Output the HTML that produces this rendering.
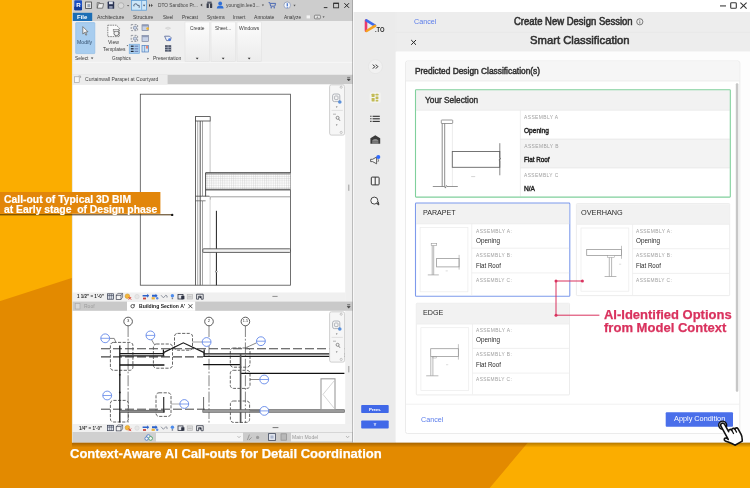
<!DOCTYPE html>
<html lang="en"><head><meta charset="utf-8"><title>Smart Classification</title>
<style>
html,body{margin:0;padding:0}
body{width:750px;height:488px;position:relative;overflow:hidden;background:#FBAD00;font-family:"Liberation Sans",sans-serif}
#stage{position:absolute;left:0;top:0;width:750px;height:488px;filter:blur(0.4px)}
svg{position:absolute;left:0;top:0;width:750px;height:488px;display:block;overflow:visible}
.t{position:absolute;white-space:nowrap;line-height:1.15;transform-origin:0 50%}
</style></head><body><div id="stage">
<svg viewBox="0 0 750 488" width="750" height="488">
<defs><linearGradient id="sh" x1="0" y1="0" x2="0" y2="1"><stop offset="0" stop-color="#5a3500" stop-opacity=".6"/><stop offset="1" stop-color="#5a3500" stop-opacity="0"/></linearGradient></defs>
<rect x="-12" y="-12" width="777" height="512" fill="#FBAD00" />
<polygon points="-12,305.1 74,277.3 74,440 530,440 479.6,500 -12,500" fill="#E38A00"/>
<rect x="72" y="441" width="693" height="6.5" fill="url(#sh)" />
</svg>
<svg viewBox="0 0 750 488" width="750" height="488">
<rect x="72" y="-12" width="281.6" height="454.4" fill="#ffffff" />
<rect x="72" y="-12" width="281" height="33" fill="#CDCDCD" />
<rect x="72" y="21" width="281" height="41" fill="#EFEFEF" />
<rect x="72" y="62" width="281" height="12.7" fill="#F0F0F0" />
<line x1="72" y1="62.3" x2="353" y2="62.3" stroke="#F9F9F9" stroke-width="0.8" />
<rect x="72" y="74.7" width="281" height="9.6" fill="#C9C9C9" />
<rect x="72" y="74.7" width="95.6" height="9.6" fill="#ECECEC" />
<rect x="345.2" y="84.2" width="7.8" height="217.3" fill="#EFEFEF" />
<rect x="345.2" y="311" width="7.8" height="120" fill="#EFEFEF" />
<rect x="72" y="292.5" width="273.2" height="9.0" fill="#F0F0F0" />
<rect x="72" y="301.5" width="281" height="9.3" fill="#C9C9C9" />
<rect x="127" y="301.5" width="68.2" height="9.3" fill="#ffffff" />
<rect x="72" y="424" width="281" height="8" fill="#F0F0F0" />
<rect x="72" y="432" width="281" height="10.4" fill="#D0D0D0" />
<rect x="156" y="432.8" width="87" height="8.6" fill="#F5F5F5" />
<rect x="243" y="432.8" width="48" height="8.6" fill="#CBCBCB" />
<rect x="291" y="432.8" width="61.3" height="8.6" fill="#F0F0F0" />
<line x1="353.1" y1="-12" x2="353.1" y2="442.4" stroke="#858585" stroke-width="1.2" />
<line x1="72.4" y1="-12" x2="72.4" y2="442.4" stroke="#E9E2CF" stroke-width="0.8" />
<rect x="74.3" y="0.3" width="7.7" height="9.9" fill="#1B4FC3" rx="0.8" />
<rect x="74.3" y="6.5" width="7.7" height="3.7" fill="#123A9A" rx="0.8" />
<rect x="85.6" y="2" width="5.8" height="6.4" fill="#E8E8E8" stroke="#444" stroke-width="0.8" />
<rect x="87.4" y="4" width="2.8" height="3.2" fill="#9AA4B5" />
<path d="M97.2 8.2 L98.4 3.6 L103.6 3.6 L102.6 8.2 Z M97.2 8.2 L97.2 2.6 L99.6 2.6 L100.2 3.6" fill="#EDEDED" stroke="#555" stroke-width="0.7" />
<rect x="107.6" y="1.6" width="6.6" height="7.2" fill="#2A3352" rx="0.6" />
<rect x="109" y="1.6" width="3.8" height="2.6" fill="#DDE2EE" />
<rect x="109.2" y="6" width="3.4" height="2.8" fill="#8C95AE" />
<circle cx="121" cy="5.6" r="2.9" fill="#D9D9D9" stroke="#A9A9A9" stroke-width="0.8" />
<path d="M127 5 l2.2 0 l-1.1 1.6 z" fill="#555" />
<rect x="131.4" y="0.4" width="15.2" height="9.8" fill="#CDE6F7" stroke="#5B9BD5" stroke-width="0.8" />
<line x1="141.6" y1="0.8" x2="141.6" y2="9.8" stroke="#5B9BD5" stroke-width="0.7" />
<path d="M134 6.4 a1.8 1.8 0 1 1 3.4 -1 l1.8 0 l0 2.4" fill="none" stroke="#3A4A66" stroke-width="0.8" />
<path d="M143 4.8 l2.2 0 l-1.1 1.6 z" fill="#445" />
<path d="M149 3.8 l1.5 1.6 l-1.5 1.6 z M151.2 3.8 l1.5 1.6 l-1.5 1.6 z" fill="#333" />
<path d="M200.4 5 l1.8 -1.5 l0 3 z" fill="#444" />
<rect x="206.6" y="3.2" width="2.2" height="4.8" fill="#3A3F4D" rx="0.5" />
<rect x="210" y="3.2" width="2.2" height="4.8" fill="#3A3F4D" rx="0.5" />
<rect x="207.2" y="1.6" width="4.4" height="2.0" fill="#555B6A" />
<circle cx="220.2" cy="3.4" r="1.9" fill="#2F6FD6" />
<path d="M216.8 8.6 a3.4 3.2 0 0 1 6.8 0 z" fill="#2F6FD6" />
<path d="M261.8 4.6 l2.2 0 l-1.1 1.6 z" fill="#555" />
<path d="M268.6 2.6 l1.2 0 l0.8 3.6 l4.2 0 l0.8 -2.8 l-5.4 0" fill="none" stroke="#3D5FB0" stroke-width="0.9" />
<circle cx="271.2" cy="7.8" r="0.7" fill="#3D5FB0" />
<circle cx="274.2" cy="7.8" r="0.7" fill="#3D5FB0" />
<circle cx="287.2" cy="5.2" r="3.3" fill="#F4F7FC" stroke="#8C98B5" stroke-width="0.8" />
<rect x="286.7" y="3.2" width="1.1" height="3.0" fill="#2D63C8" />
<rect x="286.7" y="6.8" width="1.1" height="0.9" fill="#2D63C8" />
<path d="M293.4 4.8 l2.2 0 l-1.1 1.6 z" fill="#555" />
<line x1="323.8" y1="7.6" x2="327.4" y2="7.6" stroke="#333" stroke-width="1" />
<rect x="333.6" y="3.2" width="5.0" height="4.6" fill="none" stroke="#333" stroke-width="0.9" />
<line x1="333.6" y1="3.4" x2="338.6" y2="3.4" stroke="#333" stroke-width="1.2" />
<path d="M344.4 3.2 l4.6 4.6 M349 3.2 l-4.6 4.6" fill="none" stroke="#222" stroke-width="1" />
<rect x="72.8" y="12.8" width="19.4" height="8.2" fill="#1C6EB5" />
<rect x="306.6" y="15.4" width="3.4" height="3.0" fill="#F4F4F4" />
<rect x="314.4" y="15.2" width="6.0" height="3.6" fill="#E6E6E6" stroke="#555" stroke-width="0.6" rx="0.8" />
<path d="M316.4 17.6 l1 -1.2 l1 1.2 z" fill="#444" />
<path d="M322.6 16.4 l2 0 l-1 1.4 z" fill="#333" />
<defs><linearGradient id="pn" x1="0" y1="0" x2="0" y2="1"><stop offset="0" stop-color="#FCFCFC"/><stop offset="1" stop-color="#ECECEC"/></linearGradient></defs>
<rect x="75.7" y="22.6" width="19.1" height="31.0" fill="#A8CDEF" stroke="#8FBDE6" stroke-width="0.7" rx="0.6" />
<path d="M82.8 26.6 L82.8 34 L84.6 32.4 L85.8 35.2 L86.8 34.8 L85.6 32 L88 31.8 Z" fill="#F6F6F6" stroke="#5C5C5C" stroke-width="0.7" />
<path d="M107.8 25.2 L116.4 25.2 L119.4 28.2 L119.4 36.6 L107.8 36.6 Z" fill="#FAFAFA" stroke="#6A6A6A" stroke-width="0.8" stroke-dasharray="1.6 0.8"/>
<circle cx="116.4" cy="33.2" r="2.5" fill="#F0F0F0" stroke="#555" stroke-width="0.8" />
<rect x="113.2" y="29.6" width="5.6" height="1.8" fill="#E4E4E4" stroke="#666" stroke-width="0.5" />
<path d="M126.6 45.2 l1.6 0 l-0.8 1.1 z" fill="#333" />
<rect x="129.2" y="44.2" width="10.4" height="9.4" fill="#A8CDEF" stroke="#6FA8DC" stroke-width="0.6" />
<rect x="131.20000000000002" y="24.6" width="6.4" height="6.0" fill="none" stroke="#6E7480" stroke-width="0.7" stroke-dasharray="2 1.4"/>
<circle cx="135.0" cy="27.8" r="1.7" fill="#C9D4E8" stroke="#55607A" stroke-width="0.5" />
<rect x="131.20000000000002" y="35.4" width="6.4" height="6.0" fill="none" stroke="#6E7480" stroke-width="0.7" stroke-dasharray="2 1.4"/>
<circle cx="135.0" cy="38.6" r="1.7" fill="#C9D4E8" stroke="#55607A" stroke-width="0.5" />
<rect x="142.0" y="24.8" width="6.4" height="5.8" fill="#C7D2E8" stroke="#6A7590" stroke-width="0.6" />
<rect x="142.0" y="24.8" width="6.4" height="1.6" fill="#8F9BB8" />
<rect x="142.0" y="35.6" width="6.4" height="5.8" fill="#C7D2E8" stroke="#6A7590" stroke-width="0.6" />
<rect x="142.0" y="35.6" width="6.4" height="1.6" fill="#8F9BB8" />
<circle cx="147.6" cy="28.6" r="1.3" fill="#F2B52C" />
<rect x="130.8" y="45.6" width="2.8" height="1.2" fill="#1F2430" />
<rect x="130.8" y="48.2" width="2.8" height="1.2" fill="#1F2430" />
<rect x="130.8" y="50.8" width="2.8" height="1.2" fill="#1F2430" />
<rect x="134.6" y="45.6" width="3.6" height="1.2" fill="#6F86B8" />
<rect x="134.6" y="48.2" width="3.6" height="1.2" fill="#6F86B8" />
<rect x="134.6" y="50.8" width="3.6" height="1.2" fill="#6F86B8" />
<rect x="142" y="45.4" width="6.4" height="6.6" fill="#CFE3F5" stroke="#4D7FC0" stroke-width="0.7" />
<line x1="144.6" y1="45.4" x2="144.6" y2="52" stroke="#4D7FC0" stroke-width="0.6" />
<rect x="146" y="45.8" width="2" height="2.8" fill="#E58A7A" />
<path d="M90.8 57.6 l2.6 0 l-1.3 1.7 z" fill="#444" />
<path d="M147.4 57.8 l1.6 0.9 l-1.6 0.9 z" fill="#444" />
<path d="M165.4 28.2 q2.6 -2.2 5.2 0 q-2.6 2.4 -5.2 0 z" fill="#E4E4E4" stroke="#CFCFCF" stroke-width="0.6" />
<path d="M164.6 36.2 l5 0 l1.6 1.6 l-1 2.8 l-3.6 0 z" fill="#E9EEF8" stroke="#3C4F86" stroke-width="0.7" />
<circle cx="169.6" cy="39.6" r="1.4" fill="#4B7BE0" />
<rect x="165" y="45.2" width="6.2" height="6.4" fill="#4A5266" />
<line x1="165" y1="47.4" x2="171.2" y2="47.4" stroke="#C8CEDC" stroke-width="0.6" />
<line x1="165" y1="49.6" x2="171.2" y2="49.6" stroke="#C8CEDC" stroke-width="0.6" />
<line x1="168.1" y1="45.2" x2="168.1" y2="51.6" stroke="#C8CEDC" stroke-width="0.5" />
<rect x="185" y="22" width="24.3" height="39.6" fill="url(#pn)" stroke="#E0E0E0" stroke-width="0.5" />
<path d="M195.75 57.8 l2.8 0 l-1.4 1.8 z" fill="#333" />
<rect x="211" y="22" width="24.3" height="39.6" fill="url(#pn)" stroke="#E0E0E0" stroke-width="0.5" />
<path d="M221.75 57.8 l2.8 0 l-1.4 1.8 z" fill="#333" />
<rect x="237" y="22" width="24.3" height="39.6" fill="url(#pn)" stroke="#E0E0E0" stroke-width="0.5" />
<path d="M247.75 57.8 l2.8 0 l-1.4 1.8 z" fill="#333" />
<rect x="74.6" y="76.8" width="4.6" height="5.6" fill="#F8F8F8" stroke="#9A9A9A" stroke-width="0.6" />
<path d="M78.6 76 l2 0 l0 2" fill="none" stroke="#8A8A8A" stroke-width="0.6" />
<path d="M347.2 77.4 l3 0 M347.2 79 l3 0 l-1.5 2 z" fill="#444" stroke="#444" stroke-width="0.6" />
<path d="M347.2 304.6 l3 0 M347.2 306.2 l3 0 l-1.5 2 z" fill="#444" stroke="#444" stroke-width="0.6" />
<defs><pattern id="hx" width="2.2" height="2.2" patternUnits="userSpaceOnUse"><rect width="2.2" height="2.2" fill="#FFFFFF"/><path d="M0 0.5H2.2M0.5 0V2.2" stroke="#B0B0B0" stroke-width="0.26"/></pattern></defs>
<rect x="140.3" y="94.2" width="150.2" height="191.0" fill="none" stroke="#4E4E4E" stroke-width="0.8" />
<line x1="195.5" y1="116.6" x2="195.5" y2="285.2" stroke="#3C3C3C" stroke-width="0.8" />
<line x1="197.7" y1="121" x2="197.7" y2="285.2" stroke="#777" stroke-width="0.6" />
<line x1="200.2" y1="121" x2="200.2" y2="285.2" stroke="#444" stroke-width="0.9" />
<line x1="202.5" y1="121" x2="202.5" y2="196" stroke="#666" stroke-width="0.6" />
<line x1="202.5" y1="201" x2="202.5" y2="285.2" stroke="#666" stroke-width="0.6" />
<line x1="210.1" y1="121" x2="210.1" y2="172.6" stroke="#9A9A9A" stroke-width="0.6" />
<line x1="210.1" y1="200" x2="210.1" y2="285.2" stroke="#B5B5B5" stroke-width="0.6" />
<rect x="195.5" y="116.6" width="14.7" height="4.4" fill="#fff" stroke="#444" stroke-width="0.8" />
<rect x="205.6" y="172.8" width="84.9" height="16.9" fill="url(#hx)" />
<line x1="205.6" y1="172.9" x2="290.5" y2="172.9" stroke="#3A3A3A" stroke-width="1.2" />
<line x1="205.6" y1="174.1" x2="290.5" y2="174.1" stroke="#A8A8A8" stroke-width="1" />
<line x1="205.6" y1="189.6" x2="290.5" y2="189.6" stroke="#707070" stroke-width="1.9" />
<line x1="205.6" y1="172.8" x2="205.6" y2="196.4" stroke="#3C3C3C" stroke-width="0.9" />
<line x1="210.2" y1="196.8" x2="290.5" y2="196.8" stroke="#777" stroke-width="0.7" />
<line x1="195.5" y1="196.2" x2="209.4" y2="196.2" stroke="#444" stroke-width="0.8" />
<line x1="195.5" y1="200.8" x2="205.6" y2="200.8" stroke="#555" stroke-width="0.7" />
<path d="M209 196.2 l1.2 1.2 l0 2.4" fill="none" stroke="#666" stroke-width="0.6" />
<line x1="216.4" y1="210.8" x2="216.4" y2="285.2" stroke="#1E1E1E" stroke-width="1" />
<circle cx="216.4" cy="271.6" r="0.9" fill="#fff" stroke="#333" stroke-width="0.5" />
<rect x="202.8" y="248.8" width="87.7" height="3.6" fill="#F2F2F2" stroke="#3C3C3C" stroke-width="0.8" rx="0.8" />
<line x1="272.4" y1="296.4" x2="277.6" y2="296.4" stroke="#666" stroke-width="0.7" />
<line x1="348.8" y1="184.6" x2="348.8" y2="190.8" stroke="#777" stroke-width="0.7" />
<line x1="348.8" y1="366" x2="348.8" y2="372.4" stroke="#777" stroke-width="0.7" />
<line x1="272.6" y1="427.6" x2="278.4" y2="427.6" stroke="#555" stroke-width="0.8" />
<rect x="75.2" y="303.6" width="4.8" height="5.4" fill="#D8D8D8" stroke="#A8A8A8" stroke-width="0.6" />
<circle cx="132.6" cy="306.2" r="1.7" fill="none" stroke="#333" stroke-width="0.8" />
<path d="M133.6 304.2 l1.6 0.4 l-1 1.2 z" fill="#333" />
<path d="M188.4 304.2 l4 4 M192.4 304.2 l-4 4" fill="none" stroke="#222" stroke-width="0.8" />
<line x1="128.1" y1="326" x2="128.1" y2="423" stroke="#6E6E6E" stroke-width="0.85" stroke-dasharray="11 1.8 1.8 1.8" />
<circle cx="128.1" cy="321.5" r="4.3" fill="#fff" stroke="#333" stroke-width="0.8" />
<line x1="209" y1="326" x2="209" y2="423" stroke="#6E6E6E" stroke-width="0.85" stroke-dasharray="11 1.8 1.8 1.8" />
<circle cx="209" cy="321.5" r="4.3" fill="#fff" stroke="#333" stroke-width="0.8" />
<line x1="245.4" y1="326" x2="245.4" y2="423" stroke="#6E6E6E" stroke-width="0.85" stroke-dasharray="11 1.8 1.8 1.8" />
<circle cx="245.4" cy="321.5" r="4.3" fill="#fff" stroke="#333" stroke-width="0.8" />
<line x1="101" y1="348.8" x2="345" y2="348.8" stroke="#444" stroke-width="1.1" stroke-dasharray="9 3" />
<line x1="101" y1="356.9" x2="203" y2="356.9" stroke="#444" stroke-width="1.1" stroke-dasharray="9 3" />
<line x1="101" y1="409.2" x2="205" y2="409.2" stroke="#444" stroke-width="1" stroke-dasharray="9 3" />
<rect x="110.4" y="342.4" width="22.5" height="27.9" fill="none" stroke="#555" stroke-width="0.9" rx="3" stroke-dasharray="3.2 1.4"/>
<rect x="153.4" y="344" width="19.1" height="24.2" fill="none" stroke="#555" stroke-width="0.9" rx="3" stroke-dasharray="3.2 1.4"/>
<rect x="174.5" y="333.4" width="18.0" height="16.8" fill="none" stroke="#555" stroke-width="0.9" rx="3" stroke-dasharray="3.2 1.4"/>
<rect x="230.3" y="348" width="19.7" height="19.2" fill="none" stroke="#555" stroke-width="0.9" rx="3" stroke-dasharray="3.2 1.4"/>
<rect x="230.3" y="370.3" width="19.7" height="18.1" fill="none" stroke="#555" stroke-width="0.9" rx="3" stroke-dasharray="3.2 1.4"/>
<rect x="110.4" y="400.4" width="18.0" height="21.6" fill="none" stroke="#555" stroke-width="0.9" rx="3" stroke-dasharray="3.2 1.4"/>
<rect x="156" y="392.8" width="15" height="23.6" fill="none" stroke="#555" stroke-width="0.9" rx="3" stroke-dasharray="3.2 1.4"/>
<rect x="230.4" y="401" width="19.2" height="21.4" fill="none" stroke="#555" stroke-width="0.9" rx="3" stroke-dasharray="3.2 1.4"/>
<line x1="119.8" y1="345.6" x2="119.8" y2="422.6" stroke="#1A1A1A" stroke-width="1.3" />
<circle cx="119.8" cy="374.8" r="0.9" fill="#1A1A1A" />
<circle cx="119.8" cy="392.4" r="0.9" fill="#1A1A1A" />
<line x1="119.8" y1="353.6" x2="164.4" y2="353.6" stroke="#1A1A1A" stroke-width="1.2" />
<line x1="119.8" y1="355.8" x2="164.4" y2="355.8" stroke="#1A1A1A" stroke-width="1.2" />
<line x1="119.8" y1="365" x2="164.4" y2="365" stroke="#111" stroke-width="1.3" />
<path d="M163.4 355.8 L163.4 349.6 M163.4 352.6 L183.3 342.8 L204.2 352.6 M204.2 349.4 L204.2 356" fill="none" stroke="#1A1A1A" stroke-width="1.2" stroke-linejoin="miter"/>
<line x1="203.2" y1="353.8" x2="345" y2="353.8" stroke="#1A1A1A" stroke-width="1.2" />
<line x1="203.2" y1="356.4" x2="345" y2="356.4" stroke="#1A1A1A" stroke-width="1.2" />
<line x1="203.2" y1="364.7" x2="240.6" y2="364.7" stroke="#111" stroke-width="1.2" />
<line x1="240.6" y1="373.3" x2="344.4" y2="373.3" stroke="#111" stroke-width="1.2" />
<line x1="240.6" y1="353.4" x2="240.6" y2="423" stroke="#555" stroke-width="1.7" />
<rect x="119.8" y="410.2" width="44.6" height="2.2" fill="#8A8A8A" stroke="#4A4A4A" stroke-width="0.6" />
<line x1="163.7" y1="397" x2="163.7" y2="412.4" stroke="#333" stroke-width="1.2" />
<rect x="202.8" y="409.7" width="141.6" height="2.6" fill="#9A9A9A" stroke="#555" stroke-width="0.6" />
<line x1="203.6" y1="397" x2="203.6" y2="410" stroke="#444" stroke-width="0.8" />
<rect x="321" y="378.8" width="14" height="30.8" fill="#fff" stroke="#9B9B9B" stroke-width="1.1" />
<path d="M334 381 L323 394.4 L334 408" fill="none" stroke="#BBBBBB" stroke-width="0.6" />
<path d="M109.6 338.4 L114.2 338.4 L116 342.6" fill="none" stroke="#555" stroke-width="0.7" />
<path d="M151.6 339.8 L154.2 344.2" fill="none" stroke="#555" stroke-width="0.7" />
<line x1="192.5" y1="342" x2="202.4" y2="342" stroke="#777" stroke-width="0.7" />
<path d="M256.6 342.8 L249.6 346 L245 348" fill="none" stroke="#555" stroke-width="0.7" />
<line x1="250" y1="379.5" x2="259.8" y2="379.5" stroke="#555" stroke-width="0.7" />
<line x1="171" y1="404" x2="180" y2="404" stroke="#888" stroke-width="0.7" />
<line x1="249.6" y1="410.9" x2="260" y2="410.9" stroke="#555" stroke-width="0.7" />
<circle cx="105.2" cy="338.3" r="4.4" fill="#fff" stroke="#4F78E6" stroke-width="0.8" />
<line x1="100.8" y1="338.3" x2="109.60000000000001" y2="338.3" stroke="#4F78E6" stroke-width="0.7" />
<circle cx="150.4" cy="335.4" r="4.4" fill="#fff" stroke="#4F78E6" stroke-width="0.8" />
<line x1="146.0" y1="335.4" x2="154.8" y2="335.4" stroke="#4F78E6" stroke-width="0.7" />
<circle cx="206.6" cy="342" r="4.4" fill="#fff" stroke="#4F78E6" stroke-width="0.8" />
<line x1="202.2" y1="342" x2="211.0" y2="342" stroke="#4F78E6" stroke-width="0.7" />
<circle cx="260.9" cy="341.2" r="4.4" fill="#fff" stroke="#4F78E6" stroke-width="0.8" />
<line x1="256.5" y1="341.2" x2="265.29999999999995" y2="341.2" stroke="#4F78E6" stroke-width="0.7" />
<circle cx="264.2" cy="379.5" r="4.4" fill="#fff" stroke="#4F78E6" stroke-width="0.8" />
<line x1="259.8" y1="379.5" x2="268.59999999999997" y2="379.5" stroke="#4F78E6" stroke-width="0.7" />
<circle cx="107.2" cy="395.5" r="4.4" fill="#fff" stroke="#4F78E6" stroke-width="0.8" />
<line x1="102.8" y1="395.5" x2="111.60000000000001" y2="395.5" stroke="#4F78E6" stroke-width="0.7" />
<circle cx="184.3" cy="404" r="4.4" fill="#fff" stroke="#4F78E6" stroke-width="0.8" />
<line x1="179.9" y1="404" x2="188.70000000000002" y2="404" stroke="#4F78E6" stroke-width="0.7" />
<circle cx="264.3" cy="410.9" r="4.4" fill="#fff" stroke="#4F78E6" stroke-width="0.8" />
<line x1="259.90000000000003" y1="410.9" x2="268.7" y2="410.9" stroke="#4F78E6" stroke-width="0.7" />
<rect x="329.6" y="84.8" width="15.0" height="50.3" fill="#F6F6F6" stroke="#C4C4C4" stroke-width="0.8" rx="1.8" />
<circle cx="341.2" cy="87.2" r="1.1" fill="none" stroke="#9A9A9A" stroke-width="0.5" />
<circle cx="341.2" cy="132.4" r="1.1" fill="none" stroke="#9A9A9A" stroke-width="0.5" />
<rect x="332.6" y="94.0" width="7.2" height="7.6" fill="none" stroke="#9498A0" stroke-width="0.7" rx="1.8" />
<rect x="334.6" y="96.0" width="3.4" height="3.6" fill="none" stroke="#8A8F99" stroke-width="0.6" rx="0.6" />
<circle cx="339.8" cy="102.0" r="1.8" fill="#5B90DA" />
<path d="M335.8 106.6 l1.8 0 l-0.9 1.2 z" fill="#666" />
<line x1="331.6" y1="110.4" x2="342.8" y2="110.4" stroke="#D0D0D0" stroke-width="0.6" />
<line x1="333" y1="114.19999999999999" x2="336" y2="114.19999999999999" stroke="#888" stroke-width="0.6" />
<circle cx="337.6" cy="117.8" r="1.5" fill="none" stroke="#666" stroke-width="0.7" />
<line x1="338.6" y1="119.0" x2="340" y2="120.8" stroke="#666" stroke-width="0.8" />
<path d="M335.8 124.6 l1.8 0 l-0.9 1.2 z" fill="#666" />
<rect x="329.6" y="311.8" width="15.0" height="50.3" fill="#F6F6F6" stroke="#C4C4C4" stroke-width="0.8" rx="1.8" />
<circle cx="341.2" cy="314.2" r="1.1" fill="none" stroke="#9A9A9A" stroke-width="0.5" />
<circle cx="341.2" cy="359.40000000000003" r="1.1" fill="none" stroke="#9A9A9A" stroke-width="0.5" />
<rect x="332.6" y="321.0" width="7.2" height="7.6" fill="none" stroke="#9498A0" stroke-width="0.7" rx="1.8" />
<rect x="334.6" y="323.0" width="3.4" height="3.6" fill="none" stroke="#8A8F99" stroke-width="0.6" rx="0.6" />
<circle cx="339.8" cy="329.0" r="1.8" fill="#5B90DA" />
<path d="M335.8 333.6 l1.8 0 l-0.9 1.2 z" fill="#666" />
<line x1="331.6" y1="337.40000000000003" x2="342.8" y2="337.40000000000003" stroke="#D0D0D0" stroke-width="0.6" />
<line x1="333" y1="341.2" x2="336" y2="341.2" stroke="#888" stroke-width="0.6" />
<circle cx="337.6" cy="344.8" r="1.5" fill="none" stroke="#666" stroke-width="0.7" />
<line x1="338.6" y1="346.0" x2="340" y2="347.8" stroke="#666" stroke-width="0.8" />
<path d="M335.8 351.6 l1.8 0 l-0.9 1.2 z" fill="#666" />
<rect x="107.6" y="293.8" width="5.8" height="5.4" fill="#DDE1EA" stroke="#333A4D" stroke-width="0.7" />
<line x1="107.6" y1="295.6" x2="113.4" y2="295.6" stroke="#333A4D" stroke-width="0.6" />
<line x1="109.6" y1="293.8" x2="109.6" y2="299.20000000000005" stroke="#333A4D" stroke-width="0.4" />
<line x1="111.5" y1="293.8" x2="111.5" y2="299.20000000000005" stroke="#333A4D" stroke-width="0.4" />
<rect x="116.2" y="295.20000000000005" width="4.8" height="4.2" fill="#F4F4F4" stroke="#3A3F4F" stroke-width="0.7" />
<path d="M116.2 295.20000000000005 l1.8 -1.8 l4.6 0 l0 4 l-1.6 1.8 M121 295.20000000000005 l1.6 -1.8" fill="none" stroke="#3A3F4F" stroke-width="0.6" />
<circle cx="127.4" cy="296.20000000000005" r="2.3" fill="#F4B63A" stroke="#C98E1E" stroke-width="0.5" />
<path d="M128.6 297.0 l2.6 2.6 M131.2 297.0 l-2.6 2.6" fill="none" stroke="#D8362B" stroke-width="0.9" />
<circle cx="137" cy="296.6" r="2.2" fill="#E6E6E6" stroke="#CFCFCF" stroke-width="0.5" />
<path d="M142.6 295.0 l4.6 0 l0 -1.2 l2 2 l-2 2 l0 -1.2 l-4.6 0 z" fill="#2C62C9" />
<path d="M143 297.6 l3 0 l0 1.8 l-3 0 z" fill="#C9453A" />
<path d="M152 294.8 l3.6 0 l0 -1 l2 2 l-2 2 l0 -1 l-3.6 0 z" fill="#2C62C9" />
<path d="M151.6 297.20000000000005 l3.2 0 l0 2.2 l-3.2 0 z" fill="#EBB23A" />
<circle cx="157.2" cy="298.20000000000005" r="1.2" fill="#5C8BE0" />
<path d="M161 295.20000000000005 l2.4 2.6 l2.4 -2.6 M165.8 295.20000000000005 q2 0.4 1.2 2.4" fill="none" stroke="#7A808E" stroke-width="0.8" />
<circle cx="172.4" cy="295.8" r="1.7" fill="#4C8BEB" />
<rect x="171.7" y="297.6" width="1.4" height="1.6" fill="#7A8190" />
<rect x="178" y="294.40000000000003" width="5" height="4.6" fill="#E4E6EC" stroke="#2E3342" stroke-width="0.8" />
<rect x="181.2" y="295.8" width="3.2" height="3.4" fill="#2E3342" />
<rect x="187.2" y="294.40000000000003" width="5.4" height="4.6" fill="#DEDEDE" stroke="#B5B5B5" stroke-width="0.6" />
<line x1="188.2" y1="296.8" x2="191.6" y2="296.8" stroke="#A5A5A5" stroke-width="0.6" />
<path d="M196.6 294.20000000000005 l6.6 0 M196.6 294.20000000000005 l0 5 l2 0 l0 -3 l2.6 0 l0 3 l2 0 l0 -5" fill="none" stroke="#2E3342" stroke-width="0.8" />
<rect x="199.4" y="296.40000000000003" width="1.6" height="1.6" fill="#2E3342" />
<rect x="107.6" y="425.3" width="5.8" height="5.4" fill="#DDE1EA" stroke="#333A4D" stroke-width="0.7" />
<line x1="107.6" y1="427.1" x2="113.4" y2="427.1" stroke="#333A4D" stroke-width="0.6" />
<line x1="109.6" y1="425.3" x2="109.6" y2="430.70000000000005" stroke="#333A4D" stroke-width="0.4" />
<line x1="111.5" y1="425.3" x2="111.5" y2="430.70000000000005" stroke="#333A4D" stroke-width="0.4" />
<rect x="116.2" y="426.70000000000005" width="4.8" height="4.2" fill="#F4F4F4" stroke="#3A3F4F" stroke-width="0.7" />
<path d="M116.2 426.70000000000005 l1.8 -1.8 l4.6 0 l0 4 l-1.6 1.8 M121 426.70000000000005 l1.6 -1.8" fill="none" stroke="#3A3F4F" stroke-width="0.6" />
<circle cx="127.4" cy="427.70000000000005" r="2.3" fill="#F4B63A" stroke="#C98E1E" stroke-width="0.5" />
<path d="M128.6 428.5 l2.6 2.6 M131.2 428.5 l-2.6 2.6" fill="none" stroke="#D8362B" stroke-width="0.9" />
<circle cx="137" cy="428.1" r="2.2" fill="#E6E6E6" stroke="#CFCFCF" stroke-width="0.5" />
<path d="M142.6 426.5 l4.6 0 l0 -1.2 l2 2 l-2 2 l0 -1.2 l-4.6 0 z" fill="#2C62C9" />
<path d="M143 429.1 l3 0 l0 1.8 l-3 0 z" fill="#C9453A" />
<path d="M152 426.3 l3.6 0 l0 -1 l2 2 l-2 2 l0 -1 l-3.6 0 z" fill="#2C62C9" />
<path d="M151.6 428.70000000000005 l3.2 0 l0 2.2 l-3.2 0 z" fill="#EBB23A" />
<circle cx="157.2" cy="429.70000000000005" r="1.2" fill="#5C8BE0" />
<path d="M161 426.70000000000005 l2.4 2.6 l2.4 -2.6 M165.8 426.70000000000005 q2 0.4 1.2 2.4" fill="none" stroke="#7A808E" stroke-width="0.8" />
<circle cx="172.4" cy="427.3" r="1.7" fill="#4C8BEB" />
<rect x="171.7" y="429.1" width="1.4" height="1.6" fill="#7A8190" />
<rect x="178" y="425.90000000000003" width="5" height="4.6" fill="#E4E6EC" stroke="#2E3342" stroke-width="0.8" />
<rect x="181.2" y="427.3" width="3.2" height="3.4" fill="#2E3342" />
<rect x="187.2" y="425.90000000000003" width="5.4" height="4.6" fill="#DEDEDE" stroke="#B5B5B5" stroke-width="0.6" />
<line x1="188.2" y1="428.3" x2="191.6" y2="428.3" stroke="#A5A5A5" stroke-width="0.6" />
<path d="M196.6 425.70000000000005 l6.6 0 M196.6 425.70000000000005 l0 5 l2 0 l0 -3 l2.6 0 l0 3 l2 0 l0 -5" fill="none" stroke="#2E3342" stroke-width="0.8" />
<rect x="199.4" y="427.90000000000003" width="1.6" height="1.6" fill="#2E3342" />
<circle cx="148.4" cy="436.6" r="1.9" fill="#F2F2F2" stroke="#3D74C8" stroke-width="0.8" />
<circle cx="150.6" cy="438.4" r="1.9" fill="#F2F2F2" stroke="#3D9A5A" stroke-width="0.8" />
<circle cx="146.6" cy="438.6" r="1.7" fill="#F2F2F2" stroke="#3D74C8" stroke-width="0.8" />
<path d="M237.4 436 l1.6 1.8 l1.6 -1.8" fill="none" stroke="#B5B5B5" stroke-width="0.8" />
<path d="M247.4 440 l2 -5.4 M249 440 l2.6 -2.6" fill="none" stroke="#8A8A8A" stroke-width="0.8" />
<circle cx="257.6" cy="437.4" r="1.6" fill="#9A9A9A" />
<rect x="268.6" y="433.6" width="6.8" height="6.8" fill="#E8ECF4" stroke="#4A5266" stroke-width="0.9" />
<rect x="270.4" y="435.4" width="3.2" height="3.2" fill="#AEB8CF" />
<rect x="281" y="433.8" width="5.6" height="6.4" fill="#B8B8B8" stroke="#8E8E8E" stroke-width="0.7" />
<path d="M346 436 l1.6 1.8 l1.6 -1.8" fill="none" stroke="#ABABAB" stroke-width="0.8" />
</svg>
<svg viewBox="0 0 750 488" width="750" height="488">
<rect x="353" y="-12" width="412" height="454.4" fill="#ffffff" />
<rect x="353.6" y="12" width="42.2" height="430.4" fill="#EBEBEB" />
<rect x="395.8" y="12" width="369.2" height="39.7" fill="#EDEDED" />
<line x1="395.8" y1="32.4" x2="765" y2="32.4" stroke="#E7E7E7" stroke-width="0.8" />
<line x1="395.8" y1="12" x2="395.8" y2="51.7" stroke="#E6E6E6" stroke-width="0.6" />
<rect x="395.8" y="51.7" width="369.2" height="390.7" fill="#FDFDFD" />
<line x1="720" y1="5.9" x2="726" y2="5.9" stroke="#666" stroke-width="1.4" />
<rect x="730.7" y="2.7" width="5.6" height="5.6" fill="none" stroke="#383838" stroke-width="1.1" rx="0.9" />
<path d="M740.4 2.6 l6.2 6 M746.6 2.6 l-6.2 6" fill="none" stroke="#333" stroke-width="1.05" />
<path d="M411.2 40 l4.8 4.8 M416 40 l-4.8 4.8" fill="none" stroke="#2A2A2A" stroke-width="1" />
<circle cx="639.8" cy="21.8" r="3.1" fill="none" stroke="#555" stroke-width="0.75" />
<line x1="639.8" y1="21.3" x2="639.8" y2="23.6" stroke="#555" stroke-width="0.75" />
<circle cx="639.8" cy="20.2" r="0.45" fill="#555" />
<path d="M366 20.6 L366 30.8" fill="none" stroke="#E93A6E" stroke-width="2.6" stroke-linecap="round"/>
<path d="M366.4 20.4 L375 25.6" fill="none" stroke="#3D6BEF" stroke-width="2.6" stroke-linecap="round"/>
<path d="M375 25.9 L366.6 31" fill="none" stroke="#F6A21E" stroke-width="2.6" stroke-linecap="round"/>
<circle cx="375.4" cy="66.6" r="7" fill="#F1F1F1" stroke="#E2E2E2" stroke-width="0.7" />
<path d="M372.9 64.6 l1.9 2 l-1.9 2 M375.9 64.6 l1.9 2 l-1.9 2" fill="none" stroke="#222" stroke-width="1" />
<rect x="369.6" y="92.2" width="11.2" height="10.8" fill="#F3F3F0" rx="2" />
<rect x="371.6" y="93.8" width="3.0" height="3.2" fill="#C2BB55" rx="0.4" />
<rect x="375.6" y="93.8" width="2.8" height="1.8" fill="#C2BB55" rx="0.4" />
<rect x="375.6" y="96.4" width="2.8" height="2.8" fill="#C2BB55" rx="0.4" />
<rect x="371.6" y="98" width="3.0" height="3.4" fill="#C2BB55" rx="0.4" />
<rect x="375.6" y="100" width="2.8" height="1.4" fill="#C2BB55" rx="0.4" />
<line x1="372.6" y1="116.3" x2="379.8" y2="116.3" stroke="#2E2E2E" stroke-width="1.1" />
<line x1="370.2" y1="116.3" x2="371.5" y2="116.3" stroke="#2E2E2E" stroke-width="1.1" />
<line x1="372.6" y1="118.8" x2="379.8" y2="118.8" stroke="#2E2E2E" stroke-width="1.1" />
<line x1="370.2" y1="118.8" x2="371.5" y2="118.8" stroke="#2E2E2E" stroke-width="1.1" />
<line x1="372.6" y1="121.4" x2="379.8" y2="121.4" stroke="#2E2E2E" stroke-width="1.1" />
<line x1="370.2" y1="121.4" x2="371.5" y2="121.4" stroke="#2E2E2E" stroke-width="1.1" />
<path d="M370.4 143.8 L370.4 138.2 L375.3 135.2 L380.2 138.2 L380.2 143.8 Z" fill="#3A3A3A" />
<path d="M372.2 143.8 L372.2 140.4 Q375.3 137.8 378.4 140.4 L378.4 143.8 Z" fill="#8A8A8A" />
<line x1="372.2" y1="141.9" x2="378.4" y2="141.9" stroke="#3A3A3A" stroke-width="0.5" />
<path d="M370.6 159.3 L372.6 159.3 L376.6 157 L376.6 163.8 L372.6 161.6 L370.6 161.6 Z" fill="#F4F4F4" stroke="#3A3A3A" stroke-width="0.8" stroke-linejoin="round"/>
<path d="M378 159.2 Q379 160.4 378 161.8" fill="none" stroke="#3A3A3A" stroke-width="0.7" />
<circle cx="378.3" cy="157.1" r="2" fill="#2F6BFF" />
<rect x="371.3" y="177.1" width="7.8" height="7.8" fill="#F6F6F6" stroke="#333" stroke-width="1" rx="0.8" />
<line x1="375.2" y1="177.1" x2="375.2" y2="184.9" stroke="#333" stroke-width="1" />
<circle cx="374.3" cy="200.6" r="3.5" fill="#F6F6F6" stroke="#333" stroke-width="0.9" />
<path d="M376.2 203.4 L378.9 205 L378.3 201.6" fill="#F6F6F6" stroke="#333" stroke-width="0.8" stroke-linejoin="round"/>
<path d="M376.6 203 L378.9 205.2 L378.6 202 Z" fill="#333" />
<rect x="361.2" y="405.1" width="27.5" height="8.0" fill="#4068E8" rx="0.8" />
<rect x="361.2" y="420.5" width="27.5" height="8.1" fill="#4068E8" rx="0.8" />
<rect x="405.5" y="61" width="334.3" height="372.5" fill="#ffffff" stroke="#E6E6E6" stroke-width="0.8" rx="2" />
<path d="M405.9 81 L405.9 63 Q405.9 61.4 407.5 61.4 L737.8 61.4 Q739.4 61.4 739.4 63 L739.4 81 Z" fill="#F6F6F6" />
<line x1="405.5" y1="81" x2="739.8" y2="81" stroke="#E8E8E8" stroke-width="0.7" />
<line x1="405.5" y1="404.2" x2="739.8" y2="404.2" stroke="#EDEDED" stroke-width="0.8" />
<rect x="735.8" y="83.3" width="2.5" height="308.5" fill="#C7C7C7" rx="1" />
<rect x="416" y="90.2" width="313.7" height="20.0" fill="#F2F2F2" />
<rect x="520.4" y="139.1" width="209.3" height="28.8" fill="#F3F3F3" />
<line x1="520.4" y1="110.2" x2="520.4" y2="196.6" stroke="#E9E9E9" stroke-width="0.7" />
<line x1="416" y1="110.2" x2="729.7" y2="110.2" stroke="#E6E6E6" stroke-width="0.7" />
<line x1="520.4" y1="139.1" x2="729.7" y2="139.1" stroke="#E4E4E4" stroke-width="0.7" />
<line x1="520.4" y1="167.9" x2="729.7" y2="167.9" stroke="#E4E4E4" stroke-width="0.7" />
<rect x="415.5" y="89.7" width="314.8" height="107.4" fill="none" stroke="#80D09C" stroke-width="1.1" rx="0.6" />
<rect x="441.3" y="120" width="11.4" height="3.5" fill="#fff" stroke="#707070" stroke-width="0.7" rx="0.5" />
<line x1="442.2" y1="123.5" x2="442.2" y2="186.5" stroke="#707070" stroke-width="0.8" />
<line x1="444.7" y1="123.5" x2="444.7" y2="186.5" stroke="#707070" stroke-width="0.8" />
<line x1="452.4" y1="123.5" x2="452.4" y2="186.5" stroke="#D8D8D8" stroke-width="0.5" />
<rect x="452.3" y="151.5" width="47.5" height="15.8" fill="#fff" stroke="#666" stroke-width="0.9" />
<path d="M499.8 143.2 L499.8 157.6 l1.1 1 l-2 1.4 l0.9 0.9 L499.8 175.3" fill="none" stroke="#555" stroke-width="0.7" />
<path d="M432.8 186.5 L444.6 186.5 l0.8 1.6 l1 -2.6 l0.6 1 L457.8 186.5" fill="none" stroke="#666" stroke-width="0.7" />
<line x1="471.2" y1="176.6" x2="475.2" y2="176.6" stroke="#C8C8C8" stroke-width="0.8" />
<rect x="415.5" y="203.1" width="154.3" height="93.1" fill="#fff" stroke="#7E9AEC" stroke-width="1.1" rx="0.8" />
<rect x="416.1" y="203.7" width="153.1" height="20.2" fill="#F2F2F2" />
<line x1="416.1" y1="223.9" x2="569.1999999999999" y2="223.9" stroke="#E9E9E9" stroke-width="0.6" />
<rect x="420.1" y="227.5" width="47.8" height="64.3" fill="#fff" stroke="#ECECEC" stroke-width="0.7" />
<line x1="471.7" y1="223.9" x2="471.7" y2="295.59999999999997" stroke="#EBEBEB" stroke-width="0.7" />
<line x1="471.7" y1="248.2" x2="569.1999999999999" y2="248.2" stroke="#E9E9E9" stroke-width="0.7" />
<line x1="471.7" y1="272.9" x2="569.1999999999999" y2="272.9" stroke="#E9E9E9" stroke-width="0.7" />
<rect x="576.4" y="203.6" width="153.3" height="92.0" fill="#fff" stroke="#E7E7E7" stroke-width="0.8" rx="0.8" />
<rect x="577.0" y="204.2" width="152.1" height="20.2" fill="#F2F2F2" />
<line x1="577.0" y1="224.4" x2="729.1" y2="224.4" stroke="#E9E9E9" stroke-width="0.6" />
<rect x="581.0" y="228.0" width="47.8" height="63.2" fill="#fff" stroke="#ECECEC" stroke-width="0.7" />
<line x1="632.6" y1="224.4" x2="632.6" y2="295.0" stroke="#EBEBEB" stroke-width="0.7" />
<line x1="632.6" y1="248.7" x2="729.1" y2="248.7" stroke="#E9E9E9" stroke-width="0.7" />
<line x1="632.6" y1="273.4" x2="729.1" y2="273.4" stroke="#E9E9E9" stroke-width="0.7" />
<rect x="416.3" y="303.3" width="153.2" height="91.6" fill="#fff" stroke="#E7E7E7" stroke-width="0.8" rx="0.8" />
<rect x="416.90000000000003" y="303.90000000000003" width="152.0" height="20.2" fill="#F2F2F2" />
<line x1="416.90000000000003" y1="324.1" x2="568.9" y2="324.1" stroke="#E9E9E9" stroke-width="0.6" />
<rect x="420.90000000000003" y="327.7" width="47.8" height="62.8" fill="#fff" stroke="#ECECEC" stroke-width="0.7" />
<line x1="472.5" y1="324.1" x2="472.5" y2="394.29999999999995" stroke="#EBEBEB" stroke-width="0.7" />
<line x1="472.5" y1="348.40000000000003" x2="568.9" y2="348.40000000000003" stroke="#E9E9E9" stroke-width="0.7" />
<line x1="472.5" y1="373.1" x2="568.9" y2="373.1" stroke="#E9E9E9" stroke-width="0.7" />
<rect x="431.2" y="243.4" width="5.5" height="2.2" fill="#fff" stroke="#9A9A9A" stroke-width="0.6" />
<line x1="432.2" y1="245.6" x2="432.2" y2="274.9" stroke="#9A9A9A" stroke-width="0.7" />
<line x1="433.7" y1="245.6" x2="433.7" y2="274.9" stroke="#9A9A9A" stroke-width="0.7" />
<rect x="436.6" y="258.4" width="22.5" height="8.5" fill="#fff" stroke="#9A9A9A" stroke-width="0.8" />
<line x1="459.1" y1="254.9" x2="459.1" y2="269.6" stroke="#9A9A9A" stroke-width="0.6" />
<line x1="427.8" y1="274.9" x2="438.8" y2="274.9" stroke="#9A9A9A" stroke-width="0.7" />
<line x1="445.6" y1="270.9" x2="447.8" y2="270.9" stroke="#CFCFCF" stroke-width="0.7" />
<rect x="586.7" y="249.4" width="34.8" height="6.2" fill="#fff" stroke="#9A9A9A" stroke-width="0.8" />
<line x1="621.5" y1="245.8" x2="621.5" y2="258.8" stroke="#9A9A9A" stroke-width="0.6" />
<rect x="607.6" y="255.6" width="7.0" height="1.8" fill="#fff" stroke="#9A9A9A" stroke-width="0.5" />
<line x1="609.3" y1="257.4" x2="609.3" y2="276.5" stroke="#9A9A9A" stroke-width="0.7" />
<line x1="611.6" y1="257.4" x2="611.6" y2="276.5" stroke="#9A9A9A" stroke-width="0.7" />
<line x1="604.6" y1="276.5" x2="616.4" y2="276.5" stroke="#9A9A9A" stroke-width="0.7" />
<line x1="619" y1="264.2" x2="621.2" y2="264.2" stroke="#CFCFCF" stroke-width="0.7" />
<rect x="430.7" y="348.7" width="27.7" height="7.7" fill="#fff" stroke="#9A9A9A" stroke-width="0.8" />
<line x1="458.4" y1="344.2" x2="458.4" y2="359.6" stroke="#9A9A9A" stroke-width="0.6" />
<line x1="430.8" y1="356.4" x2="430.8" y2="375.8" stroke="#9A9A9A" stroke-width="0.7" />
<line x1="432.9" y1="356.4" x2="432.9" y2="375.8" stroke="#9A9A9A" stroke-width="0.7" />
<rect x="432.9" y="356.4" width="3.3" height="1.6" fill="none" stroke="#9A9A9A" stroke-width="0.5" />
<line x1="426.2" y1="375.8" x2="438.4" y2="375.8" stroke="#9A9A9A" stroke-width="0.7" />
<line x1="446" y1="364.7" x2="448.2" y2="364.7" stroke="#CFCFCF" stroke-width="0.7" />
<rect x="665.7" y="412.2" width="67.3" height="14.6" fill="#4A6FEA" rx="1" />
</svg>
<div id="txt"><div class="t" style="left:76.30px;top:0.94px;font-size:6.2px;color:#fff;font-weight:bold;">R</div>
<div class="t" style="left:157.70px;top:1.24px;font-size:6.2px;color:#444;transform:scaleX(0.7704);">DTO Sandbox Pr...</div>
<div class="t" style="left:226.00px;top:1.24px;font-size:6.2px;color:#444;transform:scaleX(0.8056);">youngjin.lee3...</div>
<div class="t" style="left:77.20px;top:13.24px;font-size:6.2px;color:#fff;font-weight:bold;transform:scaleX(0.9737);">File</div>
<div class="t" style="left:97.30px;top:13.24px;font-size:6.2px;color:#3A3A3A;transform:scaleX(0.8283);">Architecture</div>
<div class="t" style="left:133.30px;top:13.24px;font-size:6.2px;color:#3A3A3A;transform:scaleX(0.8110);">Structure</div>
<div class="t" style="left:162.70px;top:13.24px;font-size:6.2px;color:#3A3A3A;transform:scaleX(0.7288);">Steel</div>
<div class="t" style="left:181.70px;top:13.24px;font-size:6.2px;color:#3A3A3A;transform:scaleX(0.7612);">Precast</div>
<div class="t" style="left:206.70px;top:13.24px;font-size:6.2px;color:#3A3A3A;transform:scaleX(0.7572);">Systems</div>
<div class="t" style="left:233.30px;top:13.24px;font-size:6.2px;color:#3A3A3A;transform:scaleX(0.7997);">Insert</div>
<div class="t" style="left:254.40px;top:13.24px;font-size:6.2px;color:#3A3A3A;transform:scaleX(0.8259);">Annotate</div>
<div class="t" style="left:284.00px;top:13.24px;font-size:6.2px;color:#3A3A3A;transform:scaleX(0.7752);">Analyze</div>
<div class="t" style="left:77.40px;top:39.36px;font-size:6.0px;color:#35506E;transform:scaleX(0.8601);">Modify</div>
<div class="t" style="left:75.40px;top:54.76px;font-size:6.0px;color:#3A3A3A;transform:scaleX(0.8035);">Select</div>
<div class="t" style="left:108.40px;top:39.36px;font-size:6.0px;color:#3A3A3A;transform:scaleX(0.8529);">View</div>
<div class="t" style="left:102.80px;top:45.56px;font-size:6.0px;color:#3A3A3A;transform:scaleX(0.8228);">Templates</div>
<div class="t" style="left:112.20px;top:54.76px;font-size:6.0px;color:#3A3A3A;transform:scaleX(0.7830);">Graphics</div>
<div class="t" style="left:153.40px;top:54.76px;font-size:6.0px;color:#3A3A3A;transform:scaleX(0.8400);">Presentation</div>
<div class="t" style="left:190.00px;top:25.26px;font-size:6.0px;color:#3A3A3A;transform:scaleX(0.7996);">Create</div>
<div class="t" style="left:214.60px;top:25.26px;font-size:6.0px;color:#3A3A3A;transform:scaleX(0.7833);">Sheet...</div>
<div class="t" style="left:239.20px;top:25.26px;font-size:6.0px;color:#3A3A3A;transform:scaleX(0.8299);">Windows</div>
<div class="t" style="left:84.60px;top:76.02px;font-size:5.9px;color:#444;transform:scaleX(0.8575);">Curtainwall Parapet at Courtyard</div>
<div class="t" style="left:77.00px;top:293.06px;font-size:6.0px;color:#2A2A2A;font-weight:bold;transform:scaleX(0.7506);">1 1/2&quot; = 1&#x27;-0&quot;</div>
<div class="t" style="left:84.40px;top:302.76px;font-size:6.0px;color:#9C9C9C;transform:scaleX(0.8364);">Roof</div>
<div class="t" style="left:139.00px;top:302.76px;font-size:6.0px;color:#222;font-weight:bold;transform:scaleX(0.8435);">Building Section A&#x27;</div>
<div class="t" style="left:78.60px;top:424.62px;font-size:5.9px;color:#2A2A2A;font-weight:bold;transform:scaleX(0.7619);">1/4&quot; = 1&#x27;-0&quot;</div>
<div class="t" style="left:292.40px;top:433.66px;font-size:6.0px;color:#9A9A9A;transform:scaleX(0.8448);">Main Model</div>
<div class="t" style="left:126.93px;top:319.12px;font-size:4.2px;color:#333;">3</div>
<div class="t" style="left:207.83px;top:319.12px;font-size:4.2px;color:#333;">2</div>
<div class="t" style="left:242.76px;top:319.36px;font-size:3.8px;color:#333;">1.5</div>
<div class="t" style="left:374.90px;top:25.71px;font-size:6.6px;color:#2E2E2E;font-weight:bold;transform:scaleX(0.8824);">.TO</div>
<div class="t" style="left:413.60px;top:17.53px;font-size:7.4px;color:#5B7DEB;transform:scaleX(0.9724);">Cancel</div>
<div class="t" style="left:513.50px;top:15.68px;font-size:10.2px;color:#303030;transform:scaleX(0.9313);-webkit-text-stroke:0.55px #303030;">Create New Design Session</div>
<div class="t" style="left:529.70px;top:34.29px;font-size:11.2px;color:#303030;transform:scaleX(1.0074);-webkit-text-stroke:0.55px #303030;">Smart Classification</div>
<div class="t" style="left:414.90px;top:67.10px;font-size:8.3px;color:#303030;transform:scaleX(1.0081);-webkit-text-stroke:0.45px #303030;">Predicted Design Classification(s)</div>
<div class="t" style="left:425.30px;top:95.73px;font-size:8.6px;color:#303030;transform:scaleX(0.9647);-webkit-text-stroke:0.4px #303030;">Your Selection</div>
<div class="t" style="left:524.30px;top:114.91px;font-size:4.9px;color:#9E9E9E;letter-spacing:0.4px;transform:scaleX(1.0080);">ASSEMBLY A</div>
<div class="t" style="left:524.30px;top:126.59px;font-size:6.8px;color:#222;transform:scaleX(0.9646);-webkit-text-stroke:0.4px #222;">Opening</div>
<div class="t" style="left:524.30px;top:143.91px;font-size:4.9px;color:#9E9E9E;letter-spacing:0.4px;">ASSEMBLY B</div>
<div class="t" style="left:524.30px;top:155.59px;font-size:6.8px;color:#222;transform:scaleX(0.9279);-webkit-text-stroke:0.4px #222;">Flat Roof</div>
<div class="t" style="left:524.30px;top:172.91px;font-size:4.9px;color:#9E9E9E;letter-spacing:0.4px;transform:scaleX(0.9924);">ASSEMBLY C</div>
<div class="t" style="left:524.30px;top:184.59px;font-size:6.8px;color:#222;transform:scaleX(0.9704);-webkit-text-stroke:0.4px #222;">N/A</div>
<div class="t" style="left:422.60px;top:208.48px;font-size:8px;color:#2C2C2C;transform:scaleX(0.8898);">PARAPET</div>
<div class="t" style="left:475.90px;top:228.71px;font-size:4.9px;color:#9E9E9E;letter-spacing:0.4px;transform:scaleX(1.0059);">ASSEMBLY A:</div>
<div class="t" style="left:475.90px;top:236.91px;font-size:6.6px;color:#2A2A2A;transform:scaleX(0.9618);">Opening</div>
<div class="t" style="left:475.90px;top:253.31px;font-size:4.9px;color:#9E9E9E;letter-spacing:0.4px;">ASSEMBLY B:</div>
<div class="t" style="left:475.90px;top:261.51px;font-size:6.6px;color:#2A2A2A;transform:scaleX(0.9299);">Flat Roof</div>
<div class="t" style="left:475.90px;top:277.91px;font-size:4.9px;color:#9E9E9E;letter-spacing:0.4px;transform:scaleX(0.9911);">ASSEMBLY C:</div>
<div class="t" style="left:581.20px;top:208.48px;font-size:8px;color:#2C2C2C;transform:scaleX(0.9129);">OVERHANG</div>
<div class="t" style="left:635.90px;top:228.71px;font-size:4.9px;color:#9E9E9E;letter-spacing:0.4px;transform:scaleX(1.0059);">ASSEMBLY A:</div>
<div class="t" style="left:635.90px;top:236.91px;font-size:6.6px;color:#2A2A2A;transform:scaleX(0.9618);">Opening</div>
<div class="t" style="left:635.90px;top:253.31px;font-size:4.9px;color:#9E9E9E;letter-spacing:0.4px;">ASSEMBLY B:</div>
<div class="t" style="left:635.90px;top:261.51px;font-size:6.6px;color:#2A2A2A;transform:scaleX(0.9299);">Flat Roof</div>
<div class="t" style="left:635.90px;top:277.91px;font-size:4.9px;color:#9E9E9E;letter-spacing:0.4px;transform:scaleX(0.9911);">ASSEMBLY C:</div>
<div class="t" style="left:423.00px;top:307.58px;font-size:8px;color:#2C2C2C;transform:scaleX(0.8954);">EDGE</div>
<div class="t" style="left:475.90px;top:327.81px;font-size:4.9px;color:#9E9E9E;letter-spacing:0.4px;transform:scaleX(1.0059);">ASSEMBLY A:</div>
<div class="t" style="left:475.90px;top:336.01px;font-size:6.6px;color:#2A2A2A;transform:scaleX(0.9618);">Opening</div>
<div class="t" style="left:475.90px;top:352.41px;font-size:4.9px;color:#9E9E9E;letter-spacing:0.4px;">ASSEMBLY B:</div>
<div class="t" style="left:475.90px;top:360.61px;font-size:6.6px;color:#2A2A2A;transform:scaleX(0.9299);">Flat Roof</div>
<div class="t" style="left:475.90px;top:377.01px;font-size:4.9px;color:#9E9E9E;letter-spacing:0.4px;transform:scaleX(0.9911);">ASSEMBLY C:</div>
<div class="t" style="left:420.90px;top:415.53px;font-size:7.4px;color:#5B7DEB;transform:scaleX(0.9724);">Cancel</div>
<div class="t" style="left:673.70px;top:415.47px;font-size:7px;color:#fff;transform:scaleX(1.0442);">Apply Condition</div>
<div class="t" style="left:368.89px;top:406.60px;font-size:4.4px;color:#fff;font-weight:bold;">Prem.</div>
<div class="t" style="left:373.53px;top:422.00px;font-size:4.4px;color:#fff;font-weight:bold;">Y</div></div>
<svg viewBox="0 0 750 488" width="750" height="488">
<rect x="-12" y="192" width="172.4" height="21.8" fill="#E2860A" />
<line x1="-12" y1="214.8" x2="172.2" y2="214.8" stroke="#4A3008" stroke-width="1.0" />
<circle cx="172.2" cy="214.9" r="1.2" fill="#1A1A1A" />
<path d="M582.4 281 L556 281 L556 315.2 L599.4 315.2" fill="none" stroke="#D9325E" stroke-width="1" />
<circle cx="582.4" cy="281" r="1.5" fill="#D9325E" />
<circle cx="556" cy="281" r="1.5" fill="#D9325E" />
<circle cx="556" cy="315.2" r="1.5" fill="#D9325E" />
<g transform="translate(722.7 425.2) rotate(-29) scale(1.27 1.3)" stroke-linejoin="round" stroke-linecap="round">
<circle cx="0" cy="0" r="3.1" fill="#ffffff" stroke="#111" stroke-width="1.15" fill-opacity="0.9"/>
<path d="M-1.6 0 a1.6 1.6 0 0 1 3.2 0 L1.6 6.6 c0 -1.5 2.7 -1.5 2.7 0.3 c0 -1.4 2.6 -1.1 2.6 0.5 c0 -1.2 2.3 -0.8 2.3 0.8 L9.2 13 c0 2 -0.8 3 -1.8 5 L0.8 18 c-1 -2 -3 -4 -5 -6.4 c-1 -1.5 0.6 -2.7 2 -1.4 L-1.6 11.6 Z" fill="#ffffff" stroke="#111" stroke-width="1.25" />
<path d="M4.3 7 L4.3 9.6 M6.9 7.5 L6.9 9.8" fill="none" stroke="#111" stroke-width="1" />
</g>
</svg>
<div id="txt2"><div class="t" style="left:4.40px;top:192.95px;font-size:10.6px;color:#fff;font-weight:bold;transform:scaleX(0.9788);-webkit-text-stroke:0.2px #fff;">Call-out of Typical 3D BIM</div>
<div class="t" style="left:4.40px;top:202.85px;font-size:10.6px;color:#fff;font-weight:bold;transform:scaleX(0.9789);-webkit-text-stroke:0.2px #fff;white-space:pre;">at Early stage  of Design phase</div>
<div class="t" style="left:70.00px;top:446.89px;font-size:12.9px;color:#fff;font-weight:bold;transform:scaleX(1.0097);-webkit-text-stroke:0.25px #fff;">Context-Aware AI Call-outs for Detail Coordination</div>
<div class="t" style="left:603.90px;top:307.69px;font-size:12.9px;color:#D9325E;font-weight:bold;transform:scaleX(1.0068);-webkit-text-stroke:0.25px #D9325E;">AI-Identified Options</div>
<div class="t" style="left:603.90px;top:321.49px;font-size:12.9px;color:#D9325E;font-weight:bold;transform:scaleX(1.0114);-webkit-text-stroke:0.25px #D9325E;">from Model Context</div></div>
</div></body></html>
